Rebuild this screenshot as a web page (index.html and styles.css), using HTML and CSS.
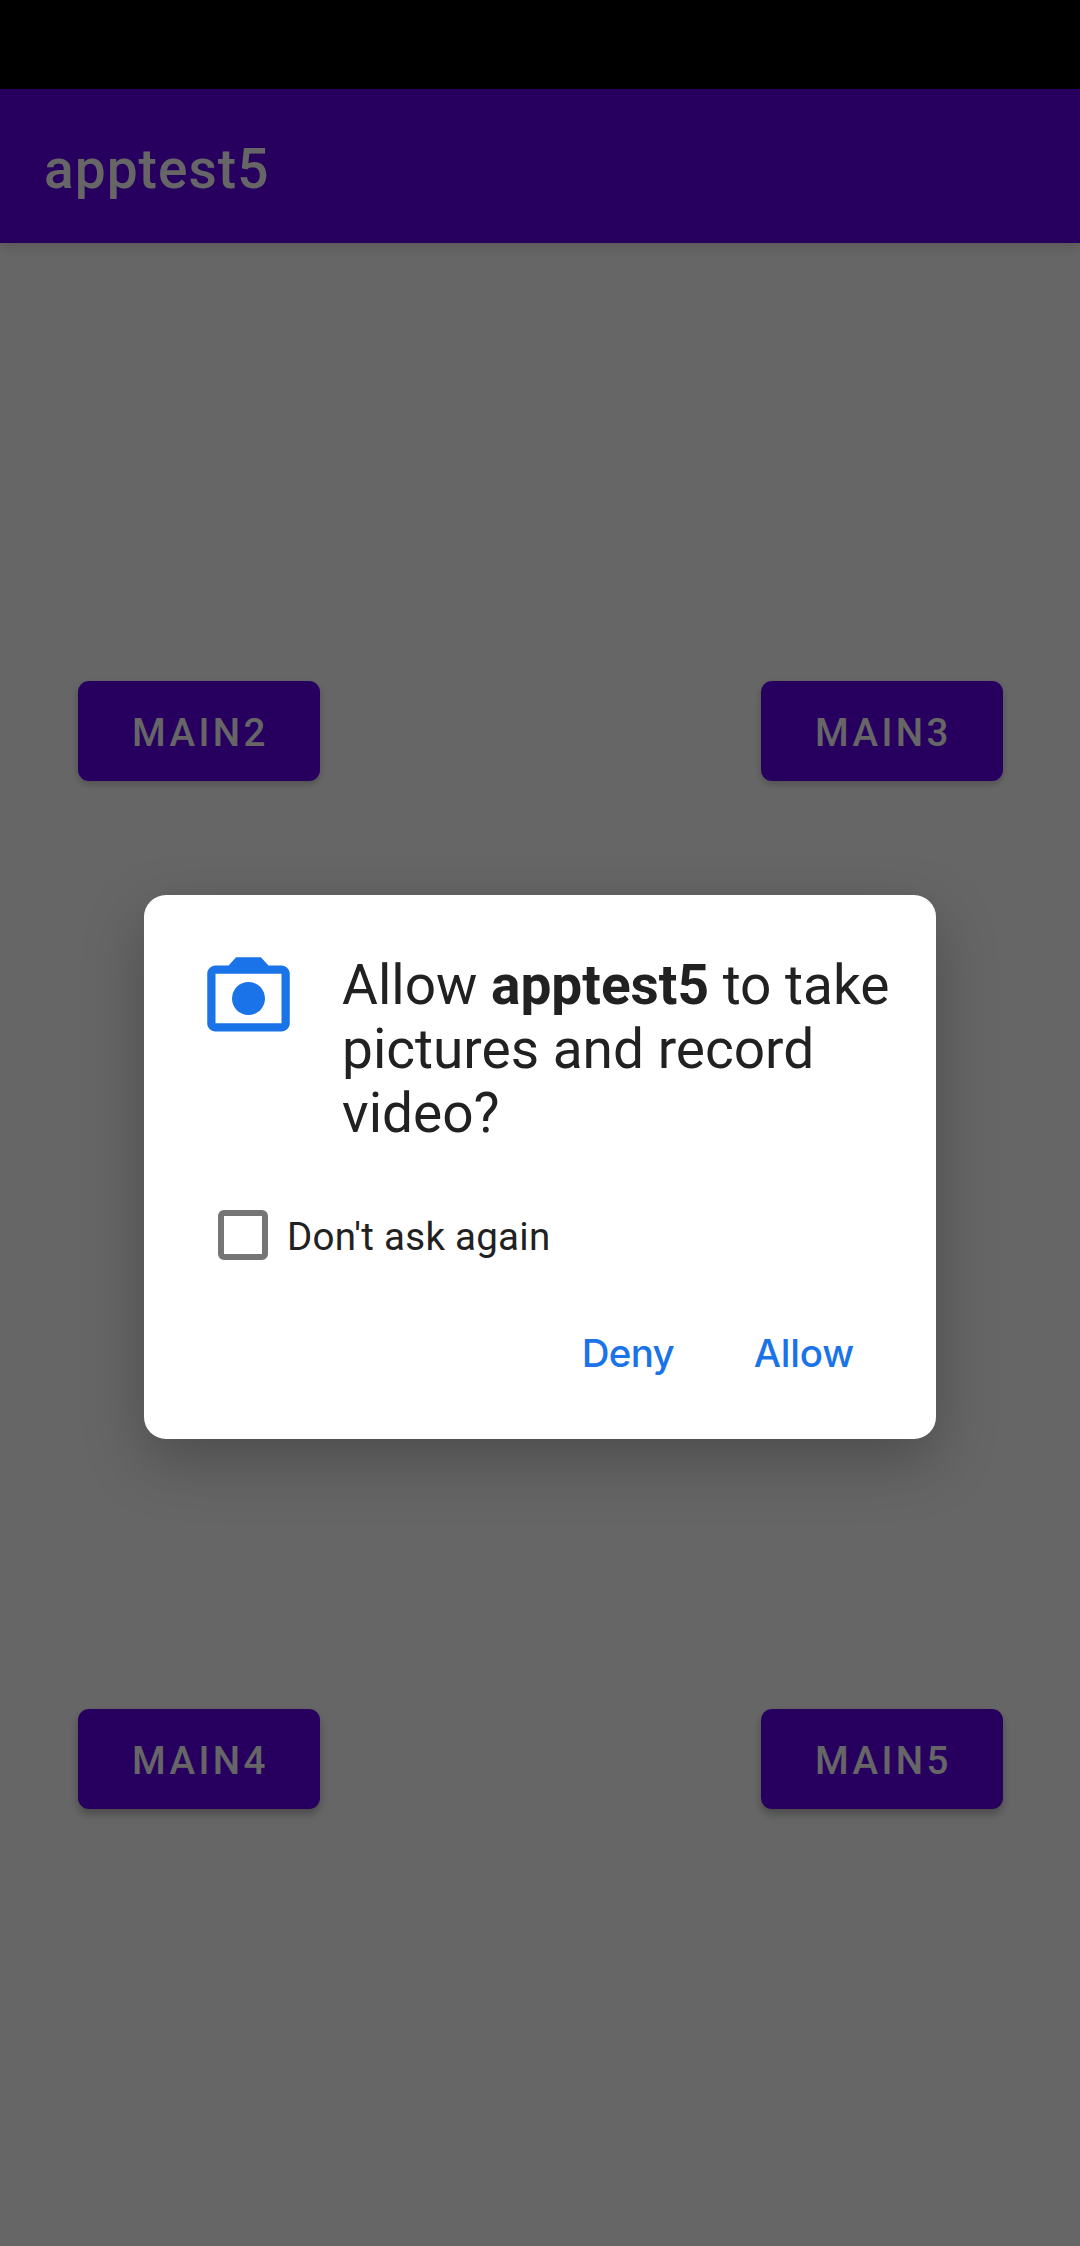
FILE: index.html
```html
<!DOCTYPE html>
<html lang="en">
<head>
<meta charset="utf-8">
<title>apptest5</title>
<link rel="stylesheet" href="styles.css">
</head>
<body>
<div class="screen">
  <div class="status-bar"></div>
  <header class="app-bar"><h1 class="app-title">apptest5</h1></header>
  <main class="content">
    <div class="button-row">
      <button class="main-button">MAIN2</button>
      <button class="main-button">MAIN3</button>
    </div>
    <div class="button-row lower">
      <button class="main-button">MAIN4</button>
      <button class="main-button">MAIN5</button>
    </div>
  </main>
  <div class="scrim">
    <section class="dialog" role="dialog" aria-labelledby="message">
      <div class="dialog-head">
        <svg class="camera" viewBox="0 0 24 24" aria-hidden="true">
          <path fill-rule="evenodd" d="M9 2 7.17 4H4c-1.1 0-2 .9-2 2v12c0 1.1 .9 2 2 2h16c1.1 0 2-.9 2-2V6c0-1.1-.9-2-2-2h-3.17L15 2ZM4 6h16v12H4Z"/>
          <circle cx="12" cy="12" r="4"/>
        </svg>
        <p class="message" id="message">Allow <b>apptest5</b> to take pictures and record video?</p>
      </div>
      <label class="check-row"><input class="check" type="checkbox"><span>Don't ask again</span></label>
      <div class="actions">
        <button class="action deny">Deny</button>
        <button class="action allow">Allow</button>
      </div>
    </section>
  </div>
</div>
</body>
</html>
```

FILE: styles.css
```css
* { box-sizing: border-box; }

body {
  margin: 0;
  background: #000;
  font-family: Roboto, "Liberation Sans", sans-serif;
}

button {
  border: 0;
  margin: 0;
  font-family: inherit;
}

.screen {
  position: relative;
  display: flex;
  flex-direction: column;
  width: 1080px;
  height: 2246px;
  overflow: hidden;
  background: #fff;
}

.status-bar { height: 89px; background: #000; }

.app-bar {
  display: flex;
  align-items: center;
  height: 154px;
  padding: 6px 44px 0;
  background: #6200ee;
  box-shadow: 0 4px 11px rgba(0, 0, 0, .14);
}

.app-title {
  margin: 0;
  color: #fff;
  font-size: 55px;
  font-weight: 500;
  line-height: 64px;
  letter-spacing: 1.05px;
}

.content {
  display: flex;
  flex-direction: column;
  padding: 438px 77px 0 78px;
}

.button-row { display: flex; justify-content: space-between; }
.button-row.lower { margin-top: 928px; }

.main-button {
  width: 242px;
  height: 100px;
  padding: 3px 0 0 3px;
  border-radius: 11px;
  background: #6200ee;
  color: #fff;
  font-size: 38.5px;
  font-weight: 500;
  letter-spacing: 3.44px;
  box-shadow: 0 3px 7px rgba(0, 0, 0, .22);
}

.lower .main-button { box-shadow: 0 5px 8px rgba(0, 0, 0, .28); }

.scrim {
  position: absolute;
  inset: 0;
  display: flex;
  align-items: center;
  justify-content: center;
  padding-top: 88px;
  background: rgba(0, 0, 0, .6);
}

.dialog {
  width: 792px;
  height: 544px;
  padding: 54px 44px 0 55px;
  border-radius: 22px;
  background: #fff;
  box-shadow: 0 22px 60px rgba(0, 0, 0, .25);
}

.dialog-head { display: flex; gap: 44px; }

.camera {
  flex: none;
  width: 99px;
  height: 99px;
  fill: #1a73e8;
}

.message {
  margin: 4px 0 0;
  color: #212121;
  font-size: 55px;
  line-height: 64px;
}

.check-row {
  display: flex;
  align-items: center;
  gap: 19px;
  height: 50px;
  margin: 65px 0 0 19px;
  color: #212121;
  font-size: 38.5px;
  letter-spacing: .27px;
}

.check {
  appearance: none;
  width: 50px;
  height: 50px;
  margin: 0;
  border: 6px solid #757575;
  border-radius: 6px;
}

.check-row span { padding-top: 2px; }

.actions {
  display: flex;
  justify-content: flex-end;
  gap: 80px;
  margin-top: 70px;
  padding-right: 38px;
}

.action {
  padding: 0;
  background: none;
  color: #1a73e8;
  font-family: Inter, Roboto, sans-serif;
  font-size: 38.5px;
  font-weight: 500;
  line-height: 46px;
}

.deny { letter-spacing: -.8px; }
.allow { letter-spacing: -.2px; }
```
